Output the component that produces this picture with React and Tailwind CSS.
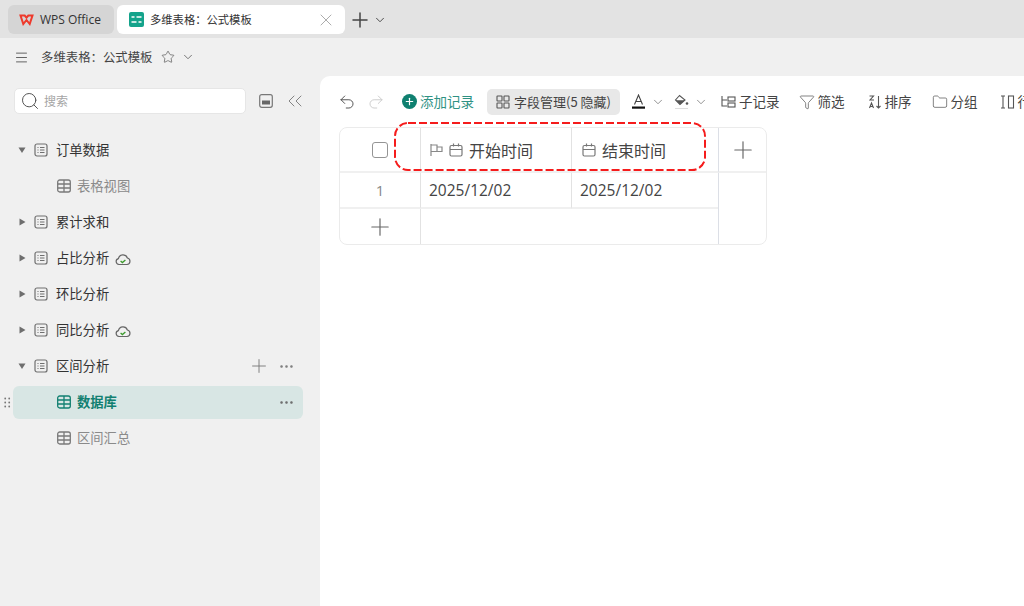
import { Search, ChevronDown, Star, Menu, X, Plus, Undo2, Redo2, Ellipsis, Filter, Folder, ChevronsLeft } from 'lucide-react';

function SheetIcon() {
  return (
    <svg width="14" height="14" viewBox="0 0 14 14" fill="none" stroke="#6f6f6f" strokeWidth="1.2" className="shrink-0">
      <rect x="1" y="1" width="12" height="12" rx="2" />
      <path d="M3.5 4.5h1M6 4.5h4.5M3.5 7h1M6 7h4.5M3.5 9.5h1M6 9.5h4.5" />
    </svg>
  );
}

function GridIcon({ color = '#7a7a7a' }) {
  return (
    <svg width="14" height="14" viewBox="0 0 14 14" fill="none" stroke={color} strokeWidth="1.3" className="shrink-0">
      <rect x="0.7" y="1" width="12.6" height="12" rx="2" />
      <path d="M0.7 5h12.6M0.7 9h12.6M7 1v12" />
    </svg>
  );
}

function Caret({ open }) {
  return (
    <svg width="8" height="8" viewBox="0 0 8 8" fill="#6e6e6e" className="shrink-0">
      {open ? <path d="M0.5 1.5h7L4 7z" /> : <path d="M1.5 0.5v7L7.5 4z" />}
    </svg>
  );
}

function CloudOk() {
  return (
    <svg width="16" height="14" viewBox="0 0 16 14" fill="none" className="ml-[6px] mt-[2px]">
      <path d="M4 12.5a3 3 0 0 1-.6-5.9 4.7 4.7 0 0 1 9-.6 3.3 3.3 0 0 1-.4 6.5z" stroke="#666" strokeWidth="1.2" />
      <path d="M5.6 9l1.8 1.6L10.4 8" stroke="#3c9a2c" strokeWidth="1.3" />
    </svg>
  );
}

function CalendarIcon() {
  return (
    <svg width="14" height="14" viewBox="0 0 14 14" fill="none" stroke="#777" strokeWidth="1.2" className="shrink-0">
      <rect x="1" y="2.5" width="12" height="10.5" rx="1.5" />
      <path d="M1 6.5h12M4.5 0.5v3M9.5 0.5v3" />
    </svg>
  );
}

function TreeTop({ label, open, cloud, actions }) {
  return (
    <div className="h-9 flex items-center pl-[18px] pr-[25px] text-[13.3px] text-[#333333]">
      <Caret open={open} />
      <span className="ml-[8px]"><SheetIcon /></span>
      <span className="ml-[8px]">{label}</span>
      {cloud && <CloudOk />}
      {actions && (
        <div className="ml-auto flex items-center gap-[8px] text-[#777777]">
          <Plus size={22} strokeWidth={1} />
          <Ellipsis size={17} strokeWidth={1.6} />
        </div>
      )}
    </div>
  );
}

function TreeChild({ label }) {
  return (
    <div className="h-9 flex items-center pl-[57px] text-[13.3px] text-[#8a8a8a]">
      <GridIcon />
      <span className="ml-[6px]">{label}</span>
    </div>
  );
}

function ToolBtn({ icon, label, className = '' }) {
  return (
    <div className={`flex items-center gap-[3px] text-[13.5px] text-[#444444] shrink-0 ${className}`}>
      {icon}
      <span>{label}</span>
    </div>
  );
}

export default function App() {
  return (
    <div className="w-[1024px] h-[606px] overflow-hidden flex flex-col bg-[#f0f0f0] font-['Noto_Sans_CJK_SC','Noto_Sans',sans-serif]">
      {/* tabs */}
      <div className="h-[38px] shrink-0 bg-[#e3e3e3] flex items-center pl-[8px] pt-[1px]">
        <div className="w-[106px] h-[29px] rounded-[6px] bg-[#d5d5d5] flex items-center pl-[11px] text-[12px] text-[#333333] font-['Open_Sans',sans-serif]">
          <svg width="15" height="12" viewBox="0 0 15 12" fill="none" stroke="#ee3a2c" strokeWidth="2">
            <path d="M1.5 1.5h4.2l1.8 2.2 1.8-2.2h4.2L10.7 10 7.5 6 4.3 10z" />
          </svg>
          <span className="ml-[6px]">WPS Office</span>
        </div>
        <div className="w-[228px] h-[29px] ml-[3px] rounded-[6px] bg-white flex items-center pl-[12px] pr-[9px] text-[11.3px] text-[#333333]">
          <svg width="15" height="15" viewBox="0 0 15 15" fill="none">
            <rect width="15" height="15" rx="2" fill="#14a38b" />
            <path d="M2.5 5h3M7.5 5h5M2.5 10h5M9.5 10h3" stroke="#fff" strokeWidth="1.6" />
          </svg>
          <span className="ml-[6px]">多维表格：公式模板</span>
          <X size={20} strokeWidth={0.9} className="ml-auto text-[#8f8f8f]" />
        </div>
        <Plus size={24} strokeWidth={1.5} className="ml-[3px] text-[#444444]" />
        <ChevronDown size={14} strokeWidth={1.6} className="ml-[1px] text-[#444444]" />
      </div>

      {/* title bar */}
      <div className="h-[38px] shrink-0 flex items-center pl-[14px] text-[12.4px] text-[#444444]">
        <Menu size={15} strokeWidth={1.3} />
        <span className="ml-[12px]">多维表格：公式模板</span>
        <Star size={14} strokeWidth={1.2} className="ml-[8px] text-[#555555]" />
        <ChevronDown size={14} strokeWidth={1.5} className="ml-[6px] text-[#666666]" />
      </div>

      <div className="flex-1 flex min-h-0">
        {/* sidebar */}
        <aside className="w-[320px] shrink-0">
          <div className="flex items-center pl-[14px] pt-[12px]">
            <div className="w-[232px] h-[26px] bg-white rounded-[5px] border border-[#e6e6e6] flex items-center pl-[5px] text-[12px] text-[#a5a5a5]">
              <Search size={20} strokeWidth={1.2} className="text-[#555555]" />
              <span className="ml-[4px]">搜索</span>
            </div>
            <svg width="14" height="14" viewBox="0 0 14 14" fill="none" className="ml-[13px]">
              <rect x="0.7" y="0.7" width="12.6" height="12.6" rx="2" stroke="#777" strokeWidth="1.2" />
              <rect x="3" y="6.5" width="8" height="4" fill="#666" />
            </svg>
            <ChevronsLeft size={24} strokeWidth={0.9} className="ml-[10px] text-[#777777]" />
          </div>
          <div className="mt-[18px]">
            <TreeTop label="订单数据" open />
            <TreeChild label="表格视图" />
            <TreeTop label="累计求和" />
            <TreeTop label="占比分析" cloud />
            <TreeTop label="环比分析" />
            <TreeTop label="同比分析" cloud />
            <TreeTop label="区间分析" open actions />
            <div className="h-9 flex items-center">
              <svg width="7" height="11" viewBox="0 0 7 11" fill="#777" className="ml-[4px] shrink-0">
                <circle cx="1.2" cy="1.5" r="0.9" /><circle cx="5.2" cy="1.5" r="0.9" />
                <circle cx="1.2" cy="5.5" r="0.9" /><circle cx="5.2" cy="5.5" r="0.9" />
                <circle cx="1.2" cy="9.5" r="0.9" /><circle cx="5.2" cy="9.5" r="0.9" />
              </svg>
              <div className="ml-[2px] w-[290px] h-[33px] rounded-[6px] bg-[#d8e6e4] flex items-center pl-[44px] pr-[8px] text-[13.3px] font-bold text-[#128071]">
                <GridIcon color="#128071" />
                <span className="ml-[6px]">数据库</span>
                <Ellipsis size={17} strokeWidth={1.6} className="ml-auto text-[#666666]" />
              </div>
            </div>
            <TreeChild label="区间汇总" />
          </div>
        </aside>

        {/* main */}
        <main className="flex-1 min-w-0 bg-white rounded-tl-[10px] relative overflow-hidden">
          <div className="h-[51px] flex items-center pl-[18px] whitespace-nowrap">
            <Undo2 size={18} strokeWidth={1.2} className="text-[#444444] shrink-0" />
            <Redo2 size={18} strokeWidth={1.2} className="ml-[11px] text-[#c8c8c8] shrink-0" />
            <div className="ml-[17px] flex items-center gap-[3px] text-[13.5px] text-[#2f9284] shrink-0">
              <span className="w-[15px] h-[15px] rounded-full bg-[#0f8070] flex items-center justify-center">
                <Plus size={11} strokeWidth={2.6} className="text-white" />
              </span>
              添加记录
            </div>
            <div className="ml-[13px] w-[133px] h-[26px] rounded-[5px] bg-[#e8e8e8] flex items-center pl-[9px] gap-[4px] text-[13px] text-[#444444] shrink-0">
              <svg width="14" height="14" viewBox="0 0 14 14" fill="none" stroke="#555" strokeWidth="1.1">
                <rect x="1" y="1" width="5" height="5" rx="0.5" /><rect x="8" y="1" width="5" height="5" rx="0.5" />
                <rect x="1" y="8" width="5" height="5" rx="0.5" /><rect x="8" y="8" width="5" height="5" rx="0.5" />
              </svg>
              字段管理(5 隐藏)
            </div>
            <svg width="13" height="15" viewBox="0 0 13 15" fill="none" className="ml-[12px] shrink-0">
              <path d="M2.5 10.5L6.5 1l4 9.5M4 7.5h5" stroke="#444" strokeWidth="1.1" />
              <rect y="12.5" width="13" height="2.2" fill="#111" />
            </svg>
            <ChevronDown size={14} strokeWidth={1.2} className="ml-[6px] text-[#666666] shrink-0" />
            <svg width="16" height="16" viewBox="0 0 16 16" fill="none" className="ml-[9px] shrink-0">
              <path d="M5.5 1.5L1.5 6l4.5 4.5L11 6z" stroke="#555" strokeWidth="1.1" />
              <path d="M1.8 6.2h9L6 10.5z" fill="#555" />
              <circle cx="13" cy="9.5" r="1.3" fill="#555" />
              <rect x="1" y="14" width="13" height="1" fill="#dddddd" />
            </svg>
            <ChevronDown size={14} strokeWidth={1.2} className="ml-[4px] text-[#666666] shrink-0" />
            <ToolBtn className="ml-[13px]" label="子记录" icon={
              <svg width="15" height="13" viewBox="0 0 15 13" fill="none" stroke="#555" strokeWidth="1.1">
                <path d="M1 1v10h5M1 5h5" /><rect x="7" y="2" width="7" height="4" /><rect x="7" y="8" width="7" height="4" />
              </svg>
            } />
            <ToolBtn className="ml-[19px]" label="筛选" icon={<Filter size={16} strokeWidth={1.1} className="text-[#555555]" />} />
            <ToolBtn className="ml-[23px]" label="排序" icon={
              <svg width="14" height="14" viewBox="0 0 14 14" fill="none" stroke="#555" strokeWidth="1.1">
                <path d="M1.5 1h4L2 5h4M1.5 13l2-5 2 5M2.2 11.5h2.6M10.5 1v12M8.5 11l2 2 2-2" />
              </svg>
            } />
            <ToolBtn className="ml-[20px]" label="分组" icon={<Folder size={16} strokeWidth={1.1} className="text-[#555555]" />} />
            <ToolBtn className="ml-[22px]" label="行高" icon={
              <svg width="15" height="14" viewBox="0 0 15 14" fill="none" stroke="#555" strokeWidth="1.1">
                <path d="M1 1h4M3 1v12M1 13h4" /><rect x="8.5" y="1" width="5" height="12" />
              </svg>
            } />
          </div>

          {/* table */}
          <div className="ml-[19px] w-[428px] h-[118px] rounded-[8px] border border-[#ebebeb] grid grid-cols-[80px_151px_147px_1fr] grid-rows-[45px_36px_1fr] text-[#444444]">
            <div className="flex items-center justify-center border-b-2 border-[#f0f0f0]">
              <span className="w-4 h-4 rounded-[3px] border border-[#949494]" />
            </div>
            <div className="flex items-center pl-[9px] gap-[6px] text-[16px] border-l border-b-2 border-l-[#e2e2e2] border-b-[#f0f0f0]">
              <svg width="13" height="14" viewBox="0 0 13 14" fill="none" stroke="#888" strokeWidth="1.2" className="shrink-0">
                <path d="M1 1v12M1 2h6v6.5H1M7 4h5v4.5H7" />
              </svg>
              <CalendarIcon />
              开始时间
            </div>
            <div className="flex items-center pl-[10px] gap-[6px] text-[16px] border-l border-b-2 border-l-[#e2e2e2] border-b-[#f0f0f0]">
              <CalendarIcon />
              结束时间
            </div>
            <div className="flex items-center justify-center border-l border-b-2 border-l-[#dcdfe6] border-b-[#f0f0f0]">
              <Plus size={28} strokeWidth={1} className="text-[#666666]" />
            </div>

            <div className="flex items-center justify-center text-[15px] text-[#888888] border-b-2 border-[#f0f0f0] font-['Open_Sans',sans-serif]">1</div>
            <div className="flex items-center pl-[8px] pt-[1px] text-[15.5px] border-l border-b-2 border-l-[#e2e2e2] border-b-[#f0f0f0] font-['Open_Sans',sans-serif]">2025/12/02</div>
            <div className="flex items-center pl-[8px] pt-[1px] text-[15.5px] border-l border-b-2 border-l-[#e2e2e2] border-b-[#f0f0f0] font-['Open_Sans',sans-serif]">2025/12/02</div>
            <div className="row-span-2 border-l border-[#dcdfe6]" />

            <div className="flex items-center justify-center">
              <Plus size={28} strokeWidth={1} className="text-[#666666]" />
            </div>
            <div className="col-span-2 border-l border-[#e2e2e2]" />
          </div>

          {/* red annotation */}
          <svg width="314" height="51" viewBox="0 0 314 51" fill="none" className="absolute left-[73px] top-[45px]">
            <rect x="2" y="2" width="310" height="47" rx="13" stroke="#f51c1c" strokeWidth="2" strokeDasharray="8 3" />
          </svg>
        </main>
      </div>
    </div>
  );
}
